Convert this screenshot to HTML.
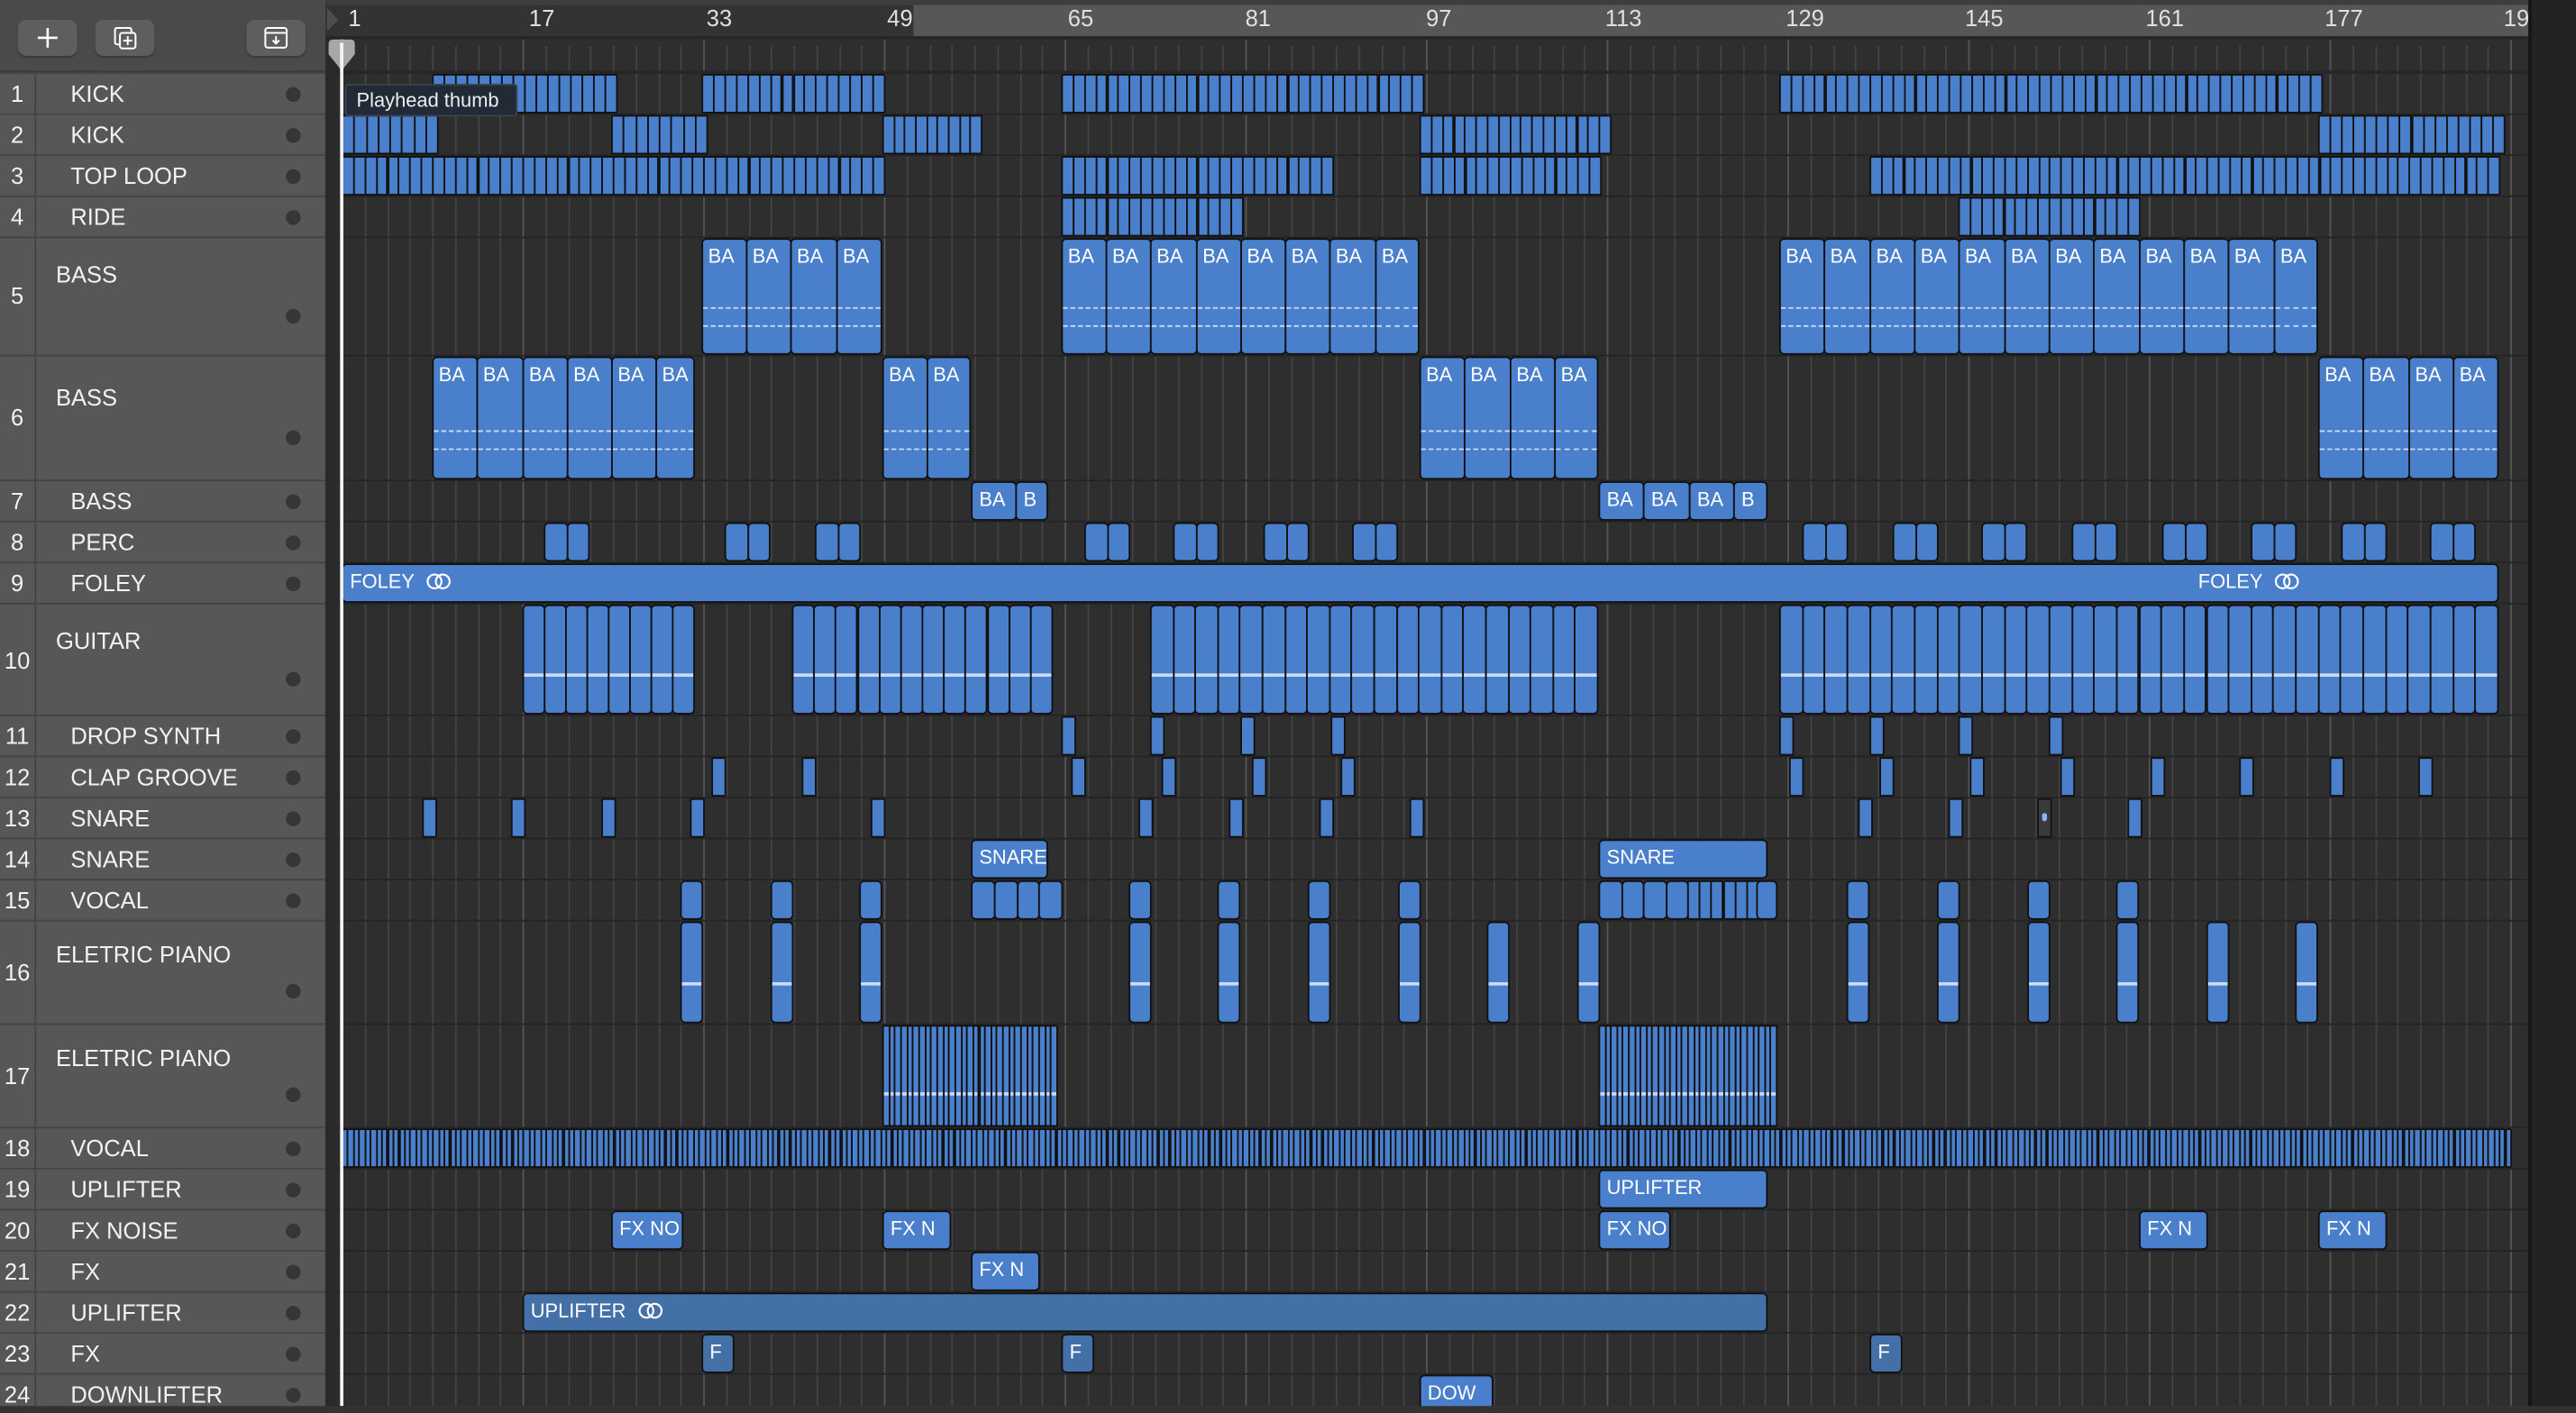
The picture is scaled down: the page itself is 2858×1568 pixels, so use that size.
<!DOCTYPE html>
<html><head><meta charset="utf-8">
<style>
html,body{margin:0;padding:0;background:#2e2e2e;overflow:hidden;width:2858px;height:1568px}
#w{position:absolute;left:0;top:0;width:1568px;height:860px;transform:scale(1.82270);transform-origin:0 0;background:#2e2e2e;font-family:"Liberation Sans",sans-serif;overflow:hidden}
#panel{position:absolute;left:0;top:0;width:198px;height:860px;background:#575757}
#hdr{position:absolute;left:0;top:0;width:198px;height:44px;background:#4a4a4a;border-bottom:1px solid #3a3a3a;box-sizing:border-box}
.btn{position:absolute;top:12px;width:36px;height:22px;background:#5e5e5e;border-radius:5px;box-shadow:0 1px 1px #3a3a3a}
.btn svg{position:absolute;left:9px;top:2px}
.tr{position:absolute;left:0;width:198px;border-top:1px solid #444;box-sizing:border-box;color:#f2f2f2;font-size:14px}
.tr .n{position:absolute;left:0;width:22px;text-align:center;height:100%;border-right:1px solid #444;box-sizing:border-box}
.tr .nm{position:absolute;left:43px}
.tr.t .nm{left:34px;top:14px}
.tr .d{position:absolute;left:174px;width:9px;height:9px;border-radius:50%;background:#363636}
#tl{position:absolute;left:198px;top:0;width:1370px;height:860px;background:#2e2e2e;border-left:8px solid #2a2a2a;box-sizing:border-box}
#ruler{position:absolute;left:198px;top:0;width:1342px;height:24px;background:#333;border-top:3px solid #3d3d3d;box-sizing:border-box;border-bottom:2px solid #262626}
#cyc{position:absolute;left:556px;top:3px;width:984px;height:19px;background:#575757}
.rl{position:absolute;top:3px;color:#e0e0e0;font-size:14px}
.rt{position:absolute;top:4px;width:1px;height:19px;background:#777}
.c{position:absolute;background:#4a7fcc;border:1px solid #111;border-radius:3px;box-sizing:border-box;color:#fff;font-size:12px;overflow:hidden;white-space:nowrap}
.c span{position:absolute;left:4px;top:3px}
.ba span{left:3px;top:3px}
.ba:before,.ba:after{content:"";position:absolute;left:0;right:0;border-top:1px dashed #c8dcff}
.ba:before{top:60%}.ba:after{top:75%}
.dk{background:#4470a8}
#right{position:absolute;left:1539px;top:0;width:29px;height:860px;background:#232323;border-left:2px solid #161616;box-sizing:border-box}
#bot{position:absolute;left:0;top:856px;width:1568px;height:4px;background:#333}
#tip{position:absolute;left:210px;top:51px;width:105px;height:20px;background:#222a36;border:1px solid #3a4455;box-sizing:border-box;color:#eee;font-size:12px;line-height:18px;padding-left:6px;border-radius:2px}
</style></head><body><div id="w">
<div id="tl"></div>
<div id="grid"></div>
<div id="ruler"></div><div id="cyc"></div>
<div class="rl" style="left:212px">1</div><div class="rl" style="left:322px">17</div><div class="rl" style="left:430px">33</div><div class="rl" style="left:540px">49</div><div class="rl" style="left:650px">65</div><div class="rl" style="left:758px">81</div><div class="rl" style="left:868px">97</div><div class="rl" style="left:977px">113</div><div class="rl" style="left:1087px">129</div><div class="rl" style="left:1196px">145</div><div class="rl" style="left:1306px">161</div><div class="rl" style="left:1415px">177</div><div class="rl" style="left:1524px">19</div>
<div id="rows"></div>
<div id="clips"></div>

<div class="c r5 ba" style="left:427px;width:28px"><span>BA</span></div><div class="c r5 ba" style="left:454px;width:28px"><span>BA</span></div><div class="c r5 ba" style="left:481px;width:29px"><span>BA</span></div><div class="c r5 ba" style="left:509px;width:28px"><span>BA</span></div>
<div class="c r5 ba" style="left:646px;width:28px"><span>BA</span></div><div class="c r5 ba" style="left:673px;width:28px"><span>BA</span></div><div class="c r5 ba" style="left:700px;width:29px"><span>BA</span></div><div class="c r5 ba" style="left:728px;width:28px"><span>BA</span></div><div class="c r5 ba" style="left:755px;width:28px"><span>BA</span></div><div class="c r5 ba" style="left:782px;width:28px"><span>BA</span></div><div class="c r5 ba" style="left:809px;width:29px"><span>BA</span></div><div class="c r5 ba" style="left:837px;width:27px"><span>BA</span></div>
<div class="c r5 ba" style="left:1083px;width:28px"><span>BA</span></div><div class="c r5 ba" style="left:1110px;width:29px"><span>BA</span></div><div class="c r5 ba" style="left:1138px;width:28px"><span>BA</span></div><div class="c r5 ba" style="left:1165px;width:28px"><span>BA</span></div><div class="c r5 ba" style="left:1192px;width:29px"><span>BA</span></div><div class="c r5 ba" style="left:1220px;width:28px"><span>BA</span></div><div class="c r5 ba" style="left:1247px;width:28px"><span>BA</span></div><div class="c r5 ba" style="left:1274px;width:29px"><span>BA</span></div><div class="c r5 ba" style="left:1302px;width:28px"><span>BA</span></div><div class="c r5 ba" style="left:1329px;width:28px"><span>BA</span></div><div class="c r5 ba" style="left:1356px;width:29px"><span>BA</span></div><div class="c r5 ba" style="left:1384px;width:27px"><span>BA</span></div>

<div class="c r6 ba" style="left:263px;width:28px"><span>BA</span></div><div class="c r6 ba" style="left:290px;width:29px"><span>BA</span></div><div class="c r6 ba" style="left:318px;width:28px"><span>BA</span></div><div class="c r6 ba" style="left:345px;width:28px"><span>BA</span></div><div class="c r6 ba" style="left:372px;width:28px"><span>BA</span></div><div class="c r6 ba" style="left:399px;width:24px"><span>BA</span></div>
<div class="c r6 ba" style="left:537px;width:28px"><span>BA</span></div><div class="c r6 ba" style="left:564px;width:27px"><span>BA</span></div>
<div class="c r6 ba" style="left:864px;width:28px"><span>BA</span></div><div class="c r6 ba" style="left:891px;width:29px"><span>BA</span></div><div class="c r6 ba" style="left:919px;width:28px"><span>BA</span></div><div class="c r6 ba" style="left:946px;width:27px"><span>BA</span></div>
<div class="c r6 ba" style="left:1411px;width:28px"><span>BA</span></div><div class="c r6 ba" style="left:1438px;width:29px"><span>BA</span></div><div class="c r6 ba" style="left:1466px;width:28px"><span>BA</span></div><div class="c r6 ba" style="left:1493px;width:28px"><span>BA</span></div>

<div class="c r7" style="left:591px;width:28px"><span>BA</span></div><div class="c r7" style="left:618px;width:20px"><span>B</span></div>
<div class="c r7" style="left:973px;width:28px"><span>BA</span></div><div class="c r7" style="left:1000px;width:29px"><span>BA</span></div><div class="c r7" style="left:1028px;width:28px"><span>BA</span></div><div class="c r7" style="left:1055px;width:21px"><span>B</span></div>

<div class="c r9" style="left:208px;width:1313px"><span>FOLEY &nbsp;<svg width="16" height="10" viewBox="0 0 16 10" style="vertical-align:-1px"><circle cx="5.5" cy="5" r="4.2" fill="none" stroke="#fff" stroke-width="1.2"/><circle cx="10.5" cy="5" r="4.2" fill="none" stroke="#fff" stroke-width="1.2"/></svg></span><span style="left:1129px">FOLEY &nbsp;<svg width="16" height="10" viewBox="0 0 16 10" style="vertical-align:-1px"><circle cx="5.5" cy="5" r="4.2" fill="none" stroke="#fff" stroke-width="1.2"/><circle cx="10.5" cy="5" r="4.2" fill="none" stroke="#fff" stroke-width="1.2"/></svg></span></div>

<div class="c r14" style="left:591px;width:47px"><span>SNARE</span></div><div class="c r14" style="left:973px;width:103px"><span>SNARE</span></div>
<div class="c r19" style="left:973px;width:103px"><span>UPLIFTER</span></div>
<div class="c r20" style="left:372px;width:44px"><span>FX NO</span></div><div class="c r20" style="left:537px;width:42px"><span>FX N</span></div><div class="c r20" style="left:973px;width:44px"><span>FX NO</span></div><div class="c r20" style="left:1302px;width:42px"><span>FX N</span></div><div class="c r20" style="left:1411px;width:42px"><span>FX N</span></div>
<div class="c r21" style="left:591px;width:42px"><span>FX N</span></div>
<div class="c r22 dk" style="left:318px;width:758px"><span>UPLIFTER &nbsp;<svg width="16" height="10" viewBox="0 0 16 10" style="vertical-align:-1px"><circle cx="5.5" cy="5" r="4.2" fill="none" stroke="#fff" stroke-width="1.2"/><circle cx="10.5" cy="5" r="4.2" fill="none" stroke="#fff" stroke-width="1.2"/></svg></span></div>
<div class="c r23 dk" style="left:427px;width:20px"><span>F</span></div><div class="c r23 dk" style="left:646px;width:20px"><span>F</span></div><div class="c r23 dk" style="left:1138px;width:20px"><span>F</span></div>
<div class="c r24" style="left:864px;width:45px;height:26px"><span>DOW</span></div>

<div id="right"></div>
<div style="position:absolute;left:207px;top:24px;width:2px;height:832px;background:#f4f4f4"></div>
<svg style="position:absolute;left:199px;top:24px" width="18" height="20" viewBox="0 0 18 20"><path d="M1 3 Q1 0 4 0 H14 Q17 0 17 3 V9 L9 19 L1 9 Z" fill="#a8a8a8"/><rect x="8" y="2" width="2" height="17" fill="#f4f4f4"/></svg>
<svg style="position:absolute;left:199px;top:5px" width="8" height="14"><path d="M0 0 L7 7 L0 14 Z" fill="#4e4e4e"/></svg>
<div id="tip">Playhead thumb</div>

<div id="panel">
<div id="hdr">
<div class="btn" style="left:11px"><svg width="18" height="18" viewBox="0 0 18 18"><path d="M9 3 V15 M3 9 H15" stroke="#fff" stroke-width="1.4"/></svg></div>
<div class="btn" style="left:58px"><svg width="18" height="18" viewBox="0 0 18 18"><path d="M6 13 H4.5 Q3 13 3 11.5 V4.5 Q3 3 4.5 3 H11.5 Q13 3 13 4.5 V6" fill="none" stroke="#fff" stroke-width="1.1"/><rect x="6" y="6" width="9.5" height="9.5" rx="1.5" fill="none" stroke="#fff" stroke-width="1.1"/><path d="M10.75 8 V13.5 M8 10.75 H13.5" stroke="#fff" stroke-width="1.1"/></svg></div>
<div class="btn" style="left:150px"><svg width="18" height="18" viewBox="0 0 18 18"><rect x="2.5" y="3" width="13" height="12" rx="1.5" fill="none" stroke="#fff" stroke-width="1.1"/><path d="M2.5 6 H15.5 M9 8 V12.5 M7 10.5 L9 12.5 L11 10.5" fill="none" stroke="#fff" stroke-width="1.1"/></svg></div>
</div>
<div class="tr" style="top:44px;height:25px;line-height:24px"><div class="n">1</div><div class="nm">KICK</div><div class="d" style="top:8px"></div></div>
<div class="tr" style="top:69px;height:25px;line-height:24px"><div class="n">2</div><div class="nm">KICK</div><div class="d" style="top:8px"></div></div>
<div class="tr" style="top:94px;height:25px;line-height:24px"><div class="n">3</div><div class="nm">TOP LOOP</div><div class="d" style="top:8px"></div></div>
<div class="tr" style="top:119px;height:25px;line-height:24px"><div class="n">4</div><div class="nm">RIDE</div><div class="d" style="top:8px"></div></div>
<div class="tr t" style="top:144px;height:72px;line-height:70px"><div class="n">5</div><div class="nm" style="line-height:16px">BASS</div><div class="d" style="top:43px"></div></div>
<div class="tr t" style="top:216px;height:76px;line-height:74px"><div class="n">6</div><div class="nm" style="line-height:16px;top:17px">BASS</div><div class="d" style="top:45px"></div></div>
<div class="tr" style="top:292px;height:25px;line-height:24px"><div class="n">7</div><div class="nm">BASS</div><div class="d" style="top:8px"></div></div>
<div class="tr" style="top:317px;height:25px;line-height:24px"><div class="n">8</div><div class="nm">PERC</div><div class="d" style="top:8px"></div></div>
<div class="tr" style="top:342px;height:25px;line-height:24px"><div class="n">9</div><div class="nm">FOLEY</div><div class="d" style="top:8px"></div></div>
<div class="tr t" style="top:367px;height:68px;line-height:68px"><div class="n">10</div><div class="nm" style="line-height:16px;top:14px">GUITAR</div><div class="d" style="top:41px"></div></div>
<div class="tr" style="top:435px;height:25px;line-height:24px"><div class="n">11</div><div class="nm">DROP SYNTH</div><div class="d" style="top:8px"></div></div>
<div class="tr" style="top:460px;height:25px;line-height:24px"><div class="n">12</div><div class="nm">CLAP GROOVE</div><div class="d" style="top:8px"></div></div>
<div class="tr" style="top:485px;height:25px;line-height:24px"><div class="n">13</div><div class="nm">SNARE</div><div class="d" style="top:8px"></div></div>
<div class="tr" style="top:510px;height:25px;line-height:24px"><div class="n">14</div><div class="nm">SNARE</div><div class="d" style="top:8px"></div></div>
<div class="tr" style="top:535px;height:25px;line-height:24px"><div class="n">15</div><div class="nm">VOCAL</div><div class="d" style="top:8px"></div></div>
<div class="tr t" style="top:560px;height:63px;line-height:62px"><div class="n">16</div><div class="nm" style="line-height:16px;top:12px">ELETRIC PIANO</div><div class="d" style="top:38px"></div></div>
<div class="tr t" style="top:623px;height:63px;line-height:62px"><div class="n">17</div><div class="nm" style="line-height:16px;top:12px">ELETRIC PIANO</div><div class="d" style="top:38px"></div></div>
<div class="tr" style="top:686px;height:25px;line-height:24px"><div class="n">18</div><div class="nm">VOCAL</div><div class="d" style="top:8px"></div></div>
<div class="tr" style="top:711px;height:25px;line-height:24px"><div class="n">19</div><div class="nm">UPLIFTER</div><div class="d" style="top:8px"></div></div>
<div class="tr" style="top:736px;height:25px;line-height:24px"><div class="n">20</div><div class="nm">FX NOISE</div><div class="d" style="top:8px"></div></div>
<div class="tr" style="top:761px;height:25px;line-height:24px"><div class="n">21</div><div class="nm">FX</div><div class="d" style="top:8px"></div></div>
<div class="tr" style="top:786px;height:25px;line-height:24px"><div class="n">22</div><div class="nm">UPLIFTER</div><div class="d" style="top:8px"></div></div>
<div class="tr" style="top:811px;height:25px;line-height:24px"><div class="n">23</div><div class="nm">FX</div><div class="d" style="top:8px"></div></div>
<div class="tr" style="top:836px;height:25px;line-height:24px"><div class="n">24</div><div class="nm">DOWNLIFTER</div><div class="d" style="top:8px"></div></div>
</div>
<div id="bot"></div>
<style id="rs"></style>
<script>
var R=[0,[44,25],[69,25],[94,25],[119,25],[144,72],[216,76],[292,25],[317,25],[342,25],[367,68],[435,25],[460,25],[485,25],[510,25],[535,25],[560,63],[623,63],[686,25],[711,25],[736,25],[761,25],[786,25],[811,25],[836,25]];
var css="";for(var i=1;i<=24;i++){css+=".r"+i+"{top:"+(R[i][0]+1)+"px;height:"+(R[i][1]-1)+"px}";}
document.getElementById("rs").textContent=css;
var g="";var X=function(b){return 208+(b-1)*6.875;};
for(var b=1;b<=196;b+=2){var x=X(b);var bright=((b-1)%16==0);g+='<div style="position:absolute;left:'+x.toFixed(1)+'px;top:'+(bright?24:28)+'px;width:1px;height:'+(bright?832:828)+'px;background:'+(bright?'#555':'#434343')+'"></div>';}
for(var b=1;b<=193;b+=16){g+='<div class="rt" style="left:'+X(b).toFixed(1)+'px"></div>';}
document.getElementById("grid").innerHTML=g;
var rw="";for(var i=1;i<=24;i++){rw+='<div style="position:absolute;left:206px;width:1334px;top:'+R[i][0]+'px;height:1px;background:#242424"></div>';}
rw+='<div style="position:absolute;left:206px;width:1334px;top:43px;height:2px;background:#262626"></div>';
document.getElementById("rows").innerHTML=rw;
var h="";
function run(r,a,e,w,line){var n=Math.max(1,Math.round((e-a)/w));var sw=(e-a)/n;for(var k=0;k<n;k++){h+=clip(r,a+k*sw,sw+1,line);}}
function clip(r,x,w,line,bg){var t=R[r][0]+1,hh=R[r][1]-1;var s='<div class="c" style="left:'+x.toFixed(1)+'px;width:'+w.toFixed(1)+'px;top:'+t+'px;height:'+hh+'px'+(w<=12?';border-radius:1px':'')+(bg?';background:'+bg:'')+'">';if(line)s+='<div style="position:absolute;left:0;right:0;top:'+line+'%;height:2px;background:#c8dcff"></div>';if(bg)s+='<div style="position:absolute;left:2px;top:8px;width:3px;height:5px;border-radius:2px;background:#8ab4ff"></div>';return s+'</div>';}
[[263,375],[427,538],[646,866],[1083,1413]].forEach(function(p){run(1,p[0],p[1],6.9)});
[[208,266],[372,430],[537,597],[864,980],[1411,1524]].forEach(function(p){run(2,p[0],p[1],6.9)});
[[208,538],[646,811],[864,974],[1138,1521]].forEach(function(p){run(3,p[0],p[1],6.9)});
[[646,756],[1192,1302]].forEach(function(p){run(4,p[0],p[1],6.9)});
[331,441,496,660,714,769,823,1097,1152,1206,1261,1316,1370,1425,1479].forEach(function(x){run(8,x,x+27,13.5)});
[[318,422],[482,640],[700,972],[1083,1520]].forEach(function(p){run(10,p[0],p[1],13.7,63)});
[646,700,755,810,1083,1138,1192,1247].forEach(function(x){h+=clip(11,x,9)});
[433,488,652,707,762,816,1089,1144,1199,1254,1309,1363,1418,1472].forEach(function(x){h+=clip(12,x,9)});
[257,311,366,420,530,693,748,803,858,1131,1186,1295].forEach(function(x){h+=clip(13,x,9)});
h+=clip(13,1240,9,0,'#3a3a3a');
[414,469,523,687,741,796,851,1124,1179,1234,1288].forEach(function(x){h+=clip(15,x,14)});
run(15,591,646,13.7);run(15,973,1027,13.7);run(15,1027,1070,6.9);h+=clip(15,1069,13);
[414,469,523,687,741,796,851,905,960,1124,1179,1234,1288,1343,1397].forEach(function(x){h+=clip(16,x,14,60)});
run(17,537,643,3.6,67);run(17,973,1081,3.6,67);
run(18,208,646,3.45);run(18,646,1528,3.45);
document.getElementById("clips").innerHTML=h;
</script>
</div></body></html>
